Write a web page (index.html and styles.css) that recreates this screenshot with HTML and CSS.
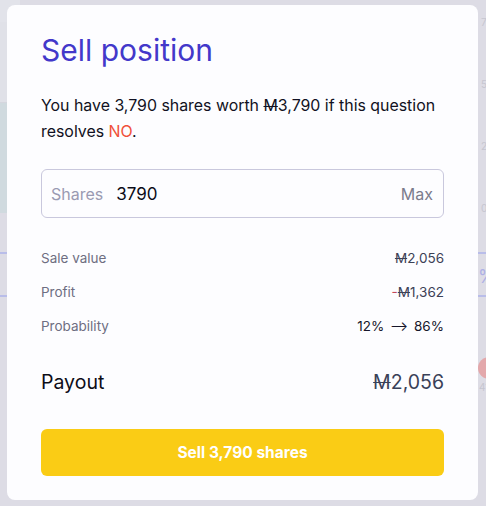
FILE: index.html
```html
<!DOCTYPE html>
<html lang="en">
<head>
    <meta charset="UTF-8">
    <meta name="viewport" content="width=device-width, initial-scale=1.0">
    <title>Sell position</title>
    <link rel="stylesheet" href="styles.css">
</head>
<body>
    <!-- page behind the dialog, dimmed -->
    <div class="backdrop">
        <div class="bg-band band-a"></div>
        <div class="bg-band band-b"></div>
        <div class="bg-line line-1"></div>
        <div class="bg-line line-2"></div>
        <span class="axis axis-7">7</span>
        <span class="axis axis-5">5</span>
        <span class="axis axis-2">2</span>
        <span class="axis axis-0">0</span>
        <span class="pct">%</span>
        <div class="dot"></div>
        <span class="dot-label">41</span>
    </div>

    <div class="modal">
        <h2 class="title">Sell position</h2>

        <p class="intro">
            You have 3,790 shares worth <span class="mana">M</span>3,790 if this question
            resolves <span class="no">NO</span>.
        </p>

        <div class="amount">
            <span class="amount-label">Shares</span>
            <span class="amount-value">3790</span>
            <span class="amount-max">Max</span>
        </div>

        <div class="stats">
            <div class="stat">
                <span>Sale value</span>
                <span class="stat-value"><span class="mana">M</span>2,056</span>
            </div>
            <div class="stat">
                <span>Profit</span>
                <span class="stat-value"><span class="neg">-</span><span class="mana">M</span>1,362</span>
            </div>
            <div class="stat">
                <span>Probability</span>
                <span class="stat-value prob">12% <span class="arrow">&#10230;</span> 86%</span>
            </div>
        </div>

        <div class="payout">
            <span>Payout</span>
            <span class="payout-value"><span class="mana">M</span>2,056</span>
        </div>

        <button class="sell-btn">Sell 3,790 shares</button>
    </div>
</body>
</html>
```

FILE: styles.css
```css
body {
    margin: 0;
    width: 486px;
    height: 506px;
    overflow: hidden;
    background: #dddce5;
    font-family: "Inter", "Liberation Sans", sans-serif;
    position: relative;
}

/* dimmed page behind */
.backdrop {
    position: absolute;
    inset: 0;
}
.bg-band {
    position: absolute;
    left: 0;
    width: 20px;
}
.band-a {
    top: 0;
    height: 103px;
    background: #e0e1e8;
    border-top: 22px solid #e2e3ea;
    border-bottom: 1px solid #d5d6de;
    box-sizing: border-box;
}
.band-b {
    top: 103px;
    height: 110px;
    background: #d0dadf;
}
.bg-line {
    position: absolute;
    left: 0;
    right: 0;
    height: 2px;
    background: #b9bde9;
}
.line-1 { top: 252px; }
.line-2 { top: 295px; }
.axis {
    position: absolute;
    left: 481px;
    font-size: 10px;
    color: #c6c6d0;
}
.axis-7 { top: 16px; }
.axis-5 { top: 78px; }
.axis-2 { top: 140px; }
.axis-0 { top: 202px; }
.pct {
    position: absolute;
    left: 478px;
    top: 266px;
    font-size: 18px;
    color: #aeb0e6;
}
.dot {
    position: absolute;
    left: 478px;
    top: 357px;
    width: 22px;
    height: 22px;
    border-radius: 50%;
    background: #e3a8ab;
}
.dot-label {
    position: absolute;
    left: 479px;
    top: 381px;
    font-size: 10px;
    color: #c6c6d0;
}

/* dialog */
.modal {
    position: absolute;
    left: 7px;
    top: 5px;
    width: 471px;
    height: 495px;
    box-sizing: border-box;
    padding: 28px 34px 0;
    background: #fdfdff;
    border-radius: 8px;
}
.title {
    margin: 0;
    font-size: 30px;
    font-weight: 400;
    line-height: 34px;
    color: #4338ca;
}
.intro {
    margin: 26px 0 0;
    font-size: 15.9px;
    line-height: 26px;
    color: #111122;
}
.no {
    color: #f0503a;
}
.mana {
    text-decoration: line-through;
    text-decoration-thickness: 1px;
}

.amount {
    display: flex;
    align-items: center;
    margin-top: 24px;
    height: 49px;
    box-sizing: border-box;
    padding: 0 10px 0 9px;
    border: 1px solid #c9c8dd;
    border-radius: 6px;
    font-size: 17px;
}
.amount-label {
    color: #9a9ab2;
    font-size: 16px;
}
.amount-value {
    margin-left: 13px;
    color: #0c0c18;
    flex: 1;
}
.amount-max {
    color: #7b7b8c;
    font-size: 16px;
}

.stats {
    margin-top: 31px;
    display: flex;
    flex-direction: column;
    gap: 16px;
}
.stat {
    display: flex;
    justify-content: space-between;
    font-size: 13.5px;
    line-height: 18px;
    color: #6e6e82;
}
.stat-value {
    color: #3c4156;
}
.neg {
    color: #c4495a;
}
.prob {
    color: #16162a;
}
.arrow {
    margin: 0 2px;
}

.payout {
    display: flex;
    justify-content: space-between;
    margin-top: 34px;
    font-size: 19.5px;
    line-height: 26px;
    color: #0d0d18;
}
.payout-value {
    color: #3a4158;
}

.sell-btn {
    display: block;
    width: 100%;
    height: 47px;
    margin-top: 34px;
    border: none;
    border-radius: 6px;
    background: #facc15;
    color: #ffffff;
    font-family: "Inter", "Liberation Sans", sans-serif;
    font-size: 15.5px;
    font-weight: 700;
}
```
